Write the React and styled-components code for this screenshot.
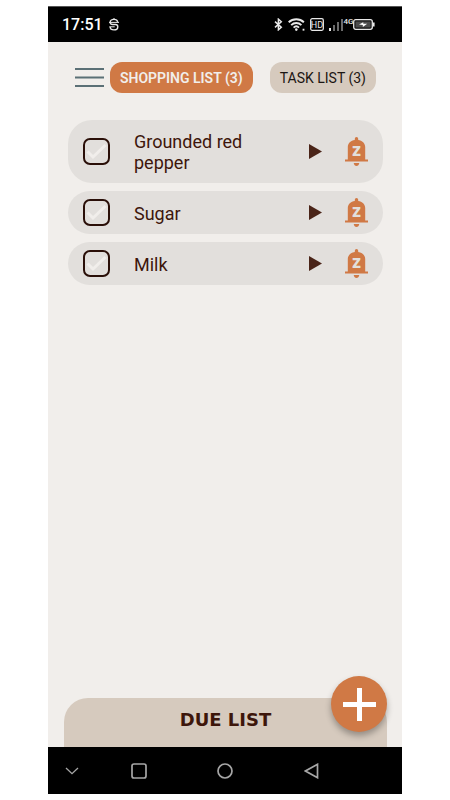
import { useState } from 'react';
import styled, { createGlobalStyle } from 'styled-components';

const colors = {
  background: '#f1eeeb',
  row: '#e2dfdc',
  primary: '#d07945',
  secondary: '#d6cabe',
  text: '#3d160b',
  icon: '#4a2418',
  menu: '#5b7076',
  system: '#a6a6a6',
};

const GlobalStyle = createGlobalStyle`
  * {
    box-sizing: border-box;
    margin: 0;
    padding: 0;
  }

  body {
    background-color: white;
    font-family: Roboto, sans-serif;
  }

  button {
    border: 0;
    background: none;
    font-family: inherit;
    cursor: pointer;
  }

  svg {
    display: block;
  }
`;

const Page = styled.div`
  min-height: 100vh;
  padding: 6px 48px;
  display: flex;
`;

const Phone = styled.div`
  flex: 1;
  min-width: 0;
  display: flex;
  flex-direction: column;
  background-color: ${colors.background};
`;

const StatusBar = styled.div`
  height: 36px;
  padding: 0 27px 0 14px;
  border-top: 1px solid #555;
  display: flex;
  align-items: center;
  justify-content: space-between;
  background-color: black;
  color: #e8e8e8;
`;

const StatusGroup = styled.div`
  display: flex;
  align-items: center;
  gap: ${({ $gap }) => $gap}px;
`;

const Time = styled.time`
  font-size: 16px;
  font-weight: 500;
  line-height: 20px;
  color: white;
`;

const Screen = styled.main`
  position: relative;
  flex: 1;
  padding: 20px 15px 0 16px;
  display: flex;
  flex-direction: column;
`;

const Header = styled.header`
  padding: 0 11px;
  display: flex;
  align-items: center;
`;

const MenuButton = styled.button`
  width: 29px;
  height: 30px;
  margin-right: 6px;
  display: flex;
  align-items: center;
`;

const Tabs = styled.nav`
  flex: 1;
  display: flex;
  justify-content: space-between;
`;

const Tab = styled.button`
  height: 31px;
  padding: 0 10px;
  border-radius: 12px;
  font-size: 14px;
  font-weight: ${({ $active }) => ($active ? 600 : 400)};
  white-space: nowrap;
  color: ${({ $active }) => ($active ? colors.background : '#1c1613')};
  background-color: ${({ $active }) => ($active ? colors.primary : colors.secondary)};
`;

const Items = styled.ul`
  padding: 27px 4px 0;
  flex: 1;
  display: flex;
  flex-direction: column;
  gap: 8px;
  list-style: none;
`;

const Item = styled.li`
  min-height: 43px;
  padding: 0 15px;
  border-radius: 24px;
  display: flex;
  align-items: center;
  background-color: ${colors.row};
`;

const CheckBox = styled.span`
  flex: none;
  display: grid;
  place-items: center;

  > * {
    grid-area: 1 / 1;
  }

  svg {
    pointer-events: none;
  }
`;

const CheckInput = styled.input`
  appearance: none;
  width: 27px;
  height: 27px;
  border: 2px solid #2a0f08;
  border-radius: 7px;
  cursor: pointer;
`;

const ItemName = styled.label`
  flex: 1;
  padding: 11px 40px 10px 24px;
  font-size: 18px;
  line-height: 21px;
  color: ${colors.text};
`;

const Actions = styled.div`
  display: flex;
  align-items: center;
  gap: 23px;
`;

const DuePanel = styled.button`
  height: 49px;
  padding-bottom: 6px;
  border-radius: 24px 24px 0 0;
  font-family: 'DejaVu Sans', sans-serif;
  font-size: 18px;
  font-weight: 700;
  color: ${colors.text};
  background-color: ${colors.secondary};
`;

const AddButton = styled.button`
  position: absolute;
  right: 15px;
  bottom: 15px;
  width: 56px;
  height: 56px;
  border-radius: 50%;
  display: grid;
  place-items: center;
  background-color: ${colors.primary};
  box-shadow: 0 4px 6px rgba(0, 0, 0, 0.3);
`;

const NavigationBar = styled.nav`
  height: 47px;
  display: grid;
  grid-template-columns: 48fr 86fr 86fr 86fr 48fr;
  background-color: black;

  button {
    display: grid;
    place-items: center;
  }
`;

function AppLogo() {
  return (
    <svg width="10" height="13" viewBox="0 0 10 13" fill="none" stroke="currentColor">
      <path d="M8.7 3.8C8.4 2.2 7 1.4 5 1.4S1.2 2.3 1.2 4.2c0 1.7 1 2.3 2.6 2.3h2.8c1.5 0 2.2.8 2.2 2.2 0 2.2-1.5 3.2-3.8 3.2S1.2 10.8 1.2 9" strokeWidth="1.4" />
      <path d="M0 4.4h10M.3 8.8h5.4M5 0v1.4" />
    </svg>
  );
}

function BluetoothIcon() {
  return (
    <svg width="9" height="13" viewBox="0 0 9 13" fill="none" stroke="currentColor" strokeWidth="1.5">
      <path d="M1 3.6l6.3 5.6-2.9 2.6V1.2l2.9 2.6L1 9.4" />
    </svg>
  );
}

function WifiIcon() {
  return (
    <svg width="17" height="13" viewBox="0 0 17 13" fill="none" stroke="currentColor" strokeWidth="1.9">
      <path d="M.7 4.3a11 11 0 0 1 15.2 0M3.2 7.1a7.3 7.3 0 0 1 10.2 0M5.6 9.6a4 4 0 0 1 5.4 0" />
      <circle cx="8.3" cy="11.6" r="1.3" fill="currentColor" stroke="none" />
      <path d="M14.6 11.7h1.8" />
    </svg>
  );
}

function HdIcon() {
  return (
    <svg width="14" height="13" viewBox="0 0 14 13">
      <rect x=".7" y=".7" width="12.6" height="11.6" rx="1.5" fill="none" stroke="currentColor" strokeWidth="1.3" />
      <text x="7" y="9.7" textAnchor="middle" fontSize="9" fill="currentColor">HD</text>
    </svg>
  );
}

function SignalIcon() {
  return (
    <svg width="24" height="15" viewBox="0 0 24 15">
      <path d="M0 11h2v3H0z" fill="currentColor" />
      <path d="M4 8h2v6H4zM8 5h2v9H8zM12 2h2v12h-2z" fill="#6b6b6b" />
      <text x="14.5" y="6.5" fontSize="8" fontWeight="500" fill="currentColor">4G</text>
    </svg>
  );
}

function BatteryIcon() {
  return (
    <svg width="22" height="11" viewBox="0 0 22 11">
      <rect x=".7" y=".7" width="18.6" height="9.6" rx="2" fill="#111" stroke="currentColor" strokeWidth="1.3" />
      <path d="M2.5 2.5h15v6h-15z" fill="#4c4c4c" />
      <path d="M20 3.5h1.6v4H20z" fill="currentColor" />
      <path d="M6 5.6l4.3-2.4v1.6h3.9L9.8 7.9V6z" fill="white" />
    </svg>
  );
}

function MenuIcon() {
  return (
    <svg width="29" height="19" viewBox="0 0 29 19" stroke={colors.menu} strokeWidth="2">
      <path d="M0 1h29M0 9.5h29M0 18h29" />
    </svg>
  );
}

function TickIcon() {
  return (
    <svg width="21" height="17" viewBox="0 0 21 17" fill="none" stroke={colors.background} strokeWidth="3">
      <path d="M1.5 8.5L7 14 19.5 2" />
    </svg>
  );
}

function PlayIcon() {
  return (
    <svg width="13" height="15" viewBox="0 0 13 15">
      <path d="M0 0l13 7.5L0 15z" fill={colors.icon} />
    </svg>
  );
}

function BellIcon() {
  return (
    <svg width="23" height="30" viewBox="0 0 23 30" fill={colors.primary}>
      <path d="M9.8 3V1.7a1.7 1.7 0 0 1 3.4 0V3c4 .5 7 3.4 7 7v12.6H23v2H0v-2h2.800V10c0-3.600 3-6.500 7-7zM8.700 26h5.600c-.3 1.900-1.400 2.900-2.800 2.900S9 27.900 8.700 26z" />
      <text x="11.5" y="19" textAnchor="middle" fontFamily="Open Sans" fontSize="14" fontWeight="800" fill={colors.row}>Z</text>
    </svg>
  );
}

function ListItem({ item, onToggle }) {
  const inputId = `item-${item.id}`;

  return (
    <Item>
      <CheckBox>
        <CheckInput
          id={inputId}
          type="checkbox"
          checked={item.done}
          onChange={() => onToggle(item.id)}
        />
        <TickIcon />
      </CheckBox>
      <ItemName htmlFor={inputId}>{item.name}</ItemName>
      <Actions>
        <button type="button" aria-label={`Open ${item.name}`}>
          <PlayIcon />
        </button>
        <button type="button" aria-label={`Snooze ${item.name}`}>
          <BellIcon />
        </button>
      </Actions>
    </Item>
  );
}

const shoppingItems = [
  { id: 1, name: 'Grounded red pepper', done: false },
  { id: 2, name: 'Sugar', done: false },
  { id: 3, name: 'Milk', done: false },
];

export default function App() {
  const [tab, setTab] = useState('shopping');
  const [items, setItems] = useState(shoppingItems);

  const handleToggle = (id) => {
    setItems(items.map((item) => (
      item.id === id ? { ...item, done: !item.done } : item
    )));
  };

  return (
    <Page>
      <GlobalStyle />
      <Phone>
        <StatusBar>
          <StatusGroup $gap={6}>
            <Time>17:51</Time>
            <AppLogo />
          </StatusGroup>
          <StatusGroup $gap={5}>
            <BluetoothIcon />
            <WifiIcon />
            <HdIcon />
            <StatusGroup $gap={0}>
              <SignalIcon />
              <BatteryIcon />
            </StatusGroup>
          </StatusGroup>
        </StatusBar>
        <Screen>
          <Header>
            <MenuButton type="button" aria-label="Menu">
              <MenuIcon />
            </MenuButton>
            <Tabs>
              <Tab type="button" $active={tab === 'shopping'} onClick={() => setTab('shopping')}>
                SHOPPING LIST (3)
              </Tab>
              <Tab type="button" $active={tab === 'task'} onClick={() => setTab('task')}>
                TASK LIST (3)
              </Tab>
            </Tabs>
          </Header>
          <Items>
            {items.map((item) => (
              <ListItem key={item.id} item={item} onToggle={handleToggle} />
            ))}
          </Items>
          <DuePanel type="button">DUE LIST</DuePanel>
          <AddButton type="button" aria-label="Add item">
            <svg width="33" height="33" viewBox="0 0 33 33" stroke="white" strokeWidth="5">
              <path d="M16.5 0v33M0 16.5h33" />
            </svg>
          </AddButton>
        </Screen>
        <NavigationBar>
          <button type="button" aria-label="Hide">
            <svg width="14" height="8" viewBox="0 0 14 8" fill="none" stroke={colors.system} strokeWidth="1.3">
              <path d="M1 1l6 5.7L13 1" />
            </svg>
          </button>
          <button type="button" aria-label="Recent apps">
            <svg width="16" height="16" viewBox="0 0 16 16" fill="none" stroke={colors.system} strokeWidth="1.7">
              <rect x="1" y="1" width="14" height="14" rx="2" />
            </svg>
          </button>
          <button type="button" aria-label="Home">
            <svg width="16" height="16" viewBox="0 0 16 16" fill="none" stroke={colors.system} strokeWidth="1.7">
              <circle cx="8" cy="8" r="7" />
            </svg>
          </button>
          <button type="button" aria-label="Back">
            <svg width="15" height="16" viewBox="0 0 15 16" fill="none" stroke={colors.system} strokeWidth="1.7">
              <path d="M13.5 1.3v13.4L1.5 8z" />
            </svg>
          </button>
        </NavigationBar>
      </Phone>
    </Page>
  );
}
